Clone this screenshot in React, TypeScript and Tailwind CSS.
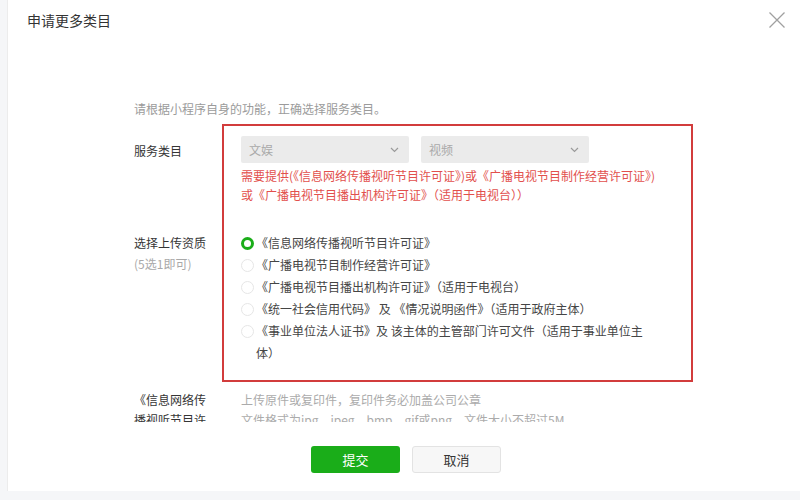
const font = { fontFamily: '"Noto Sans CJK SC", "Noto Sans", sans-serif' };

const OPTIONS = [
  "《信息网络传播视听节目许可证》",
  "《广播电视节目制作经营许可证》",
  "《广播电视节目播出机构许可证》（适用于电视台）",
  "《统一社会信用代码》 及 《情况说明函件》（适用于政府主体）",
  "《事业单位法人证书》及 该主体的主管部门许可文件（适用于事业单位主体）",
];

function Select({ value }: { value: string }) {
  return (
    <div className="flex h-[27px] w-[168px] items-center justify-between rounded-[2px] bg-[#ebebeb] pl-[8px] pr-[10px] text-[12px] text-[#a9a9a9]">
      <span>{value}</span>
      <svg width="9" height="6" viewBox="0 0 9 6" fill="none">
        <path d="M1 1l3.5 3.5L8 1" stroke="#9a9a9a" strokeWidth="1.2" />
      </svg>
    </div>
  );
}

function Radio({ checked }: { checked: boolean }) {
  return checked ? (
    <span className="mt-[5px] h-[13px] w-[13px] shrink-0 rounded-full border-[3px] border-[#1aad19] bg-white" />
  ) : (
    <span className="mt-[5px] h-[13px] w-[13px] shrink-0 rounded-full border border-[#e6e6e6] bg-white" />
  );
}

export default function App() {
  return (
    <div className="relative h-[500px] w-[800px] overflow-hidden bg-[#f5f6f8]" style={font}>
      <div className="ml-[7px] flex h-[491px] flex-col border-l border-[#ececec] bg-white">
        <div className="flex items-start justify-between pl-[19px] pr-[14px] pt-[10px]">
          <h1 className="text-[14px] leading-[20px] text-[#333]">申请更多类目</h1>
          <svg width="18" height="18" viewBox="0 0 18 18" className="mt-[1px]">
            <path d="M1.5 1.5l15 15M16.5 1.5l-15 15" stroke="#a0a0a0" strokeWidth="1.3" />
          </svg>
        </div>

        <div className="mt-[60px] h-[332px] overflow-hidden pl-[126px] pt-[9px]">
          <p className="mb-[17px] text-[12px] leading-[20px] text-[#9b9b9b]">
            请根据小程序自身的功能，正确选择服务类目。
          </p>

          <div className="grid grid-cols-[78px_1fr] gap-x-[29px] text-[12px]">
            <div className="pt-[5px] leading-[20px] text-[#353535]">服务类目</div>
            <div>
              <div className="flex gap-[12px]">
                <Select value="文娱" />
                <Select value="视频" />
              </div>
              <p className="mt-[3px] w-[440px] leading-[19px] text-[#e2504d]">
                需要提供(《信息网络传播视听节目许可证》)或《广播电视节目制作经营许可证》)
                <br />
                或《广播电视节目播出机构许可证》（适用于电视台））
              </p>
            </div>

            <div className="mt-[28px] leading-[21px] text-[#353535]">
              选择上传资质
              <div className="text-[#a9a9a9]">(5选1即可)</div>
            </div>
            <div className="mt-[28px] flex flex-col">
              {OPTIONS.map((o, i) => (
                <label key={i} className="flex w-[405px] gap-[2px] leading-[22px] text-[#454545]">
                  <Radio checked={i === 0} />
                  <span className="w-[396px]">{o}</span>
                </label>
              ))}
            </div>

            <div className="mt-[26px] leading-[20px] text-[#353535]">《信息网络传播视听节目许可证》</div>
            <div className="mt-[26px] leading-[20px] text-[#ababab]">
              上传原件或复印件，复印件务必加盖公司公章
              <br />
              文件格式为jpg、jpeg、bmp、gif或png，文件大小不超过5M
            </div>
          </div>
        </div>

        <div className="mt-[24px] flex justify-center gap-[12px] pl-[4px]">
          <button className="h-[27px] w-[89px] rounded-[3px] bg-[#1aad19] text-[13px] text-white">提交</button>
          <button className="h-[27px] w-[89px] rounded-[3px] border border-[#e3e3e3] bg-[#f7f7f7] text-[13px] text-[#353535]">
            取消
          </button>
        </div>
      </div>

      <div className="pointer-events-none absolute left-[222px] top-[124px] h-[258px] w-[471px] border-2 border-[#d23c3c]" />
    </div>
  );
}
